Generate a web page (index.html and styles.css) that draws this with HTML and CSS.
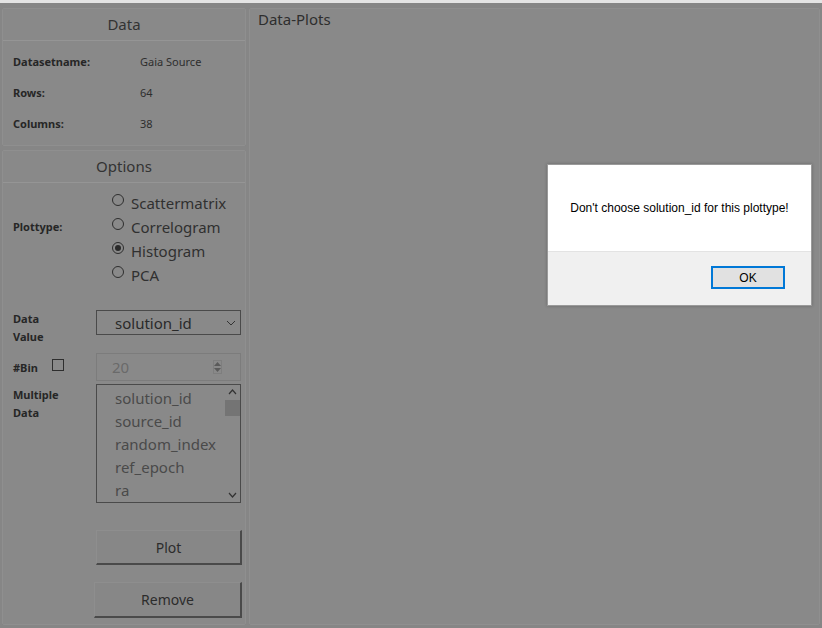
FILE: index.html
```html
<!DOCTYPE html>
<html>
<head>
<meta charset="utf-8">
<link rel="stylesheet" href="styles.css">
</head>
<body>
<div class="topstrip"></div>
<div class="app">
  <div class="sidebar">
    <section class="group data-group">
      <div class="group-title">Data</div>
      <div class="info">
        <div class="info-row"><span class="lbl">Datasetname:</span><span class="val">Gaia Source</span></div>
        <div class="info-row"><span class="lbl">Rows:</span><span class="val">64</span></div>
        <div class="info-row"><span class="lbl">Columns:</span><span class="val">38</span></div>
      </div>
    </section>
    <section class="group options-group">
      <div class="group-title">Options</div>
      <div class="opt-row plottype">
        <span class="lbl">Plottype:</span>
        <div class="radios">
          <div class="radio"><span class="circle"></span>Scattermatrix</div>
          <div class="radio"><span class="circle"></span>Correlogram</div>
          <div class="radio"><span class="circle checked"></span>Histogram</div>
          <div class="radio"><span class="circle"></span>PCA</div>
        </div>
      </div>
      <div class="opt-row datavalue">
        <span class="lbl twoline">Data<br>Value</span>
        <div class="select"><span>solution_id</span>
          <svg class="chev" width="10" height="6" viewBox="0 0 10 6"><path d="M1 1 L5 5 L9 1" fill="none" stroke="#333" stroke-width="1"/></svg>
        </div>
      </div>
      <div class="opt-row bin">
        <span class="lbl binlbl">#Bin <span class="check"></span></span>
        <div class="spin"><span>20</span>
          <div class="spinarrows">
            <svg width="7" height="4" viewBox="0 0 7 4"><path d="M0 4 L3.5 0 L7 4Z" fill="#5a5a5a"/></svg>
            <svg width="7" height="4" viewBox="0 0 7 4"><path d="M0 0 L3.5 4 L7 0Z" fill="#5a5a5a"/></svg>
          </div>
        </div>
      </div>
      <div class="opt-row multi">
        <span class="lbl twoline">Multiple<br>Data</span>
        <div class="listbox">
          <ul class="items">
            <li>solution_id</li>
            <li>source_id</li>
            <li>random_index</li>
            <li>ref_epoch</li>
            <li>ra</li>
          </ul>
          <div class="scrollbar">
            <svg width="9" height="6" viewBox="0 0 9 6"><path d="M1 5 L4.5 1 L8 5" fill="none" stroke="#333" stroke-width="1.2"/></svg>
            <div class="thumb"></div>
            <div class="track"></div>
            <svg width="9" height="6" viewBox="0 0 9 6"><path d="M1 1 L4.5 5 L8 1" fill="none" stroke="#333" stroke-width="1.2"/></svg>
          </div>
        </div>
      </div>
      <div class="btn-row plotrow"><button class="btn plot">Plot</button></div>
      <div class="btn-row removerow"><button class="btn remove">Remove</button></div>
    </section>
  </div>
  <section class="plots">
    <div class="plots-title">Data-Plots</div>
  </section>
</div>
<div class="dialog">
  <div class="dialog-body">Don't choose solution_id for this plottype!</div>
  <div class="dialog-foot"><button class="ok">OK</button></div>
</div>
</body>
</html>
```

FILE: styles.css
```css
html, body {
  margin: 0;
  padding: 0;
  width: 822px;
  height: 628px;
  overflow: hidden;
  background: #868686;
  font-family: "Noto Sans", "Open Sans", sans-serif;
  color: #2c2c2c;
}
.topstrip {
  height: 3px;
  background: #e4e4e4;
}
.app {
  display: flex;
  padding: 5px 2px 0 2px;
  gap: 3px;
  height: 617px;
}
.sidebar {
  width: 244px;
  display: flex;
  flex-direction: column;
  gap: 4px;
}
.group {
  background: #898989;
  border: 1px solid #8f8f8f;
  border-radius: 2px;
}
.data-group { height: 136px; }
.options-group { flex: 1; }
.group-title {
  height: 31px;
  line-height: 30px;
  text-align: center;
  font-size: 15px;
  color: #333;
  border-bottom: 1px solid #959595;
}
.info { padding: 5px 0 0 10px; }
.info-row {
  display: flex;
  height: 31px;
  align-items: center;
  font-size: 11px;
}
.lbl {
  font-weight: bold;
  font-size: 11px;
  color: #262626;
}
.info-row .lbl { width: 127px; }
.val { color: #2e2e2e; }

.opt-row {
  display: flex;
  padding-left: 10px;
}
.opt-row > .lbl { width: 83px; flex: none; }
.plottype { padding-top: 8px; height: 119px; box-sizing: border-box; }
.plottype .lbl { padding-top: 28px; }
.radios { display: flex; flex-direction: column; padding-left: 16px; }
.radio {
  display: flex;
  align-items: center;
  height: 24px;
  font-size: 15px;
  color: #303030;
}
.circle {
  width: 12px;
  height: 12px;
  border: 1px solid #2e2e2e;
  border-radius: 50%;
  margin-right: 7px;
  box-sizing: border-box;
  position: relative;
  top: -3px;
}
.circle.checked::after {
  content: "";
  position: absolute;
  left: 2px; top: 2px;
  width: 6px; height: 6px;
  border-radius: 50%;
  background: #2a2a2a;
}
.datavalue { margin-top: 8px; height: 39px; }
.twoline { line-height: 18px; }
.select {
  width: 145px;
  height: 25px;
  border: 1px solid #4a4a4a;
  box-sizing: border-box;
  display: flex;
  align-items: center;
  padding-left: 18px;
  font-size: 15px;
  color: #2a2a2a;
  position: relative;
}
.chev { position: absolute; right: 4px; top: 9px; }
.bin { height: 31px; margin-top: 4px; }
.binlbl { display: flex; align-items: flex-start; padding-top: 7px; }
.check {
  display: inline-block;
  width: 12px; height: 12px;
  border: 1px solid #2e2e2e;
  box-sizing: border-box;
  margin-left: 14px;
  margin-top: -1px;
}
.spin {
  width: 145px;
  height: 28px;
  border: 1px solid #7c7c7c;
  box-sizing: border-box;
  display: flex;
  align-items: center;
  padding-left: 15px;
  font-size: 15px;
  color: #6a6a6a;
  position: relative;
}
.spinarrows {
  position: absolute;
  right: 18px; top: 6px;
  width: 9px; height: 14px;
  display: flex; flex-direction: column; align-items: center; gap: 2px;
  border: 1px solid #7e7e7e;
  box-sizing: border-box;
  padding-top: 1px;
}
.multi { height: 119px; }
.multi .lbl { padding-top: 2px; }
.listbox {
  width: 145px;
  height: 119px;
  border: 1px solid #4a4a4a;
  box-sizing: border-box;
  display: flex;
  overflow: hidden;
}
.items {
  list-style: none;
  margin: 0;
  padding: 2px 0 0 18px;
  flex: 1;
  font-size: 15px;
  color: #4a4a4a;
}
.items li { height: 23px; line-height: 23px; }
.scrollbar {
  width: 16px;
  display: flex;
  flex-direction: column;
  align-items: center;
  padding-top: 4px;
  padding-bottom: 4px;
  box-sizing: border-box;
}
.thumb {
  width: 15px; height: 16px;
  background: #747474;
  margin-top: 5px;
}
.track { flex: 1; }
.btn-row { padding-left: 93px; }
.plotrow { margin-top: 27px; }
.removerow { margin-top: 17px; padding-left: 91px; }
.btn {
  display: block;
  width: 147px;
  height: 35px;
  background: #878787;
  border: none;
  border-top: 1px solid #8e8e8e;
  border-left: 1px solid #8e8e8e;
  border-right: 2px solid #4a4a4a;
  border-bottom: 2px solid #4a4a4a;
  font-family: "Noto Sans", "Open Sans", sans-serif;
  font-size: 14px;
  color: #2c2c2c;
  padding: 0;
}
.plot { width: 146px; }
.remove { width: 148px; height: 36px; }
.plots {
  flex: 1;
  background: #898989;
  border: 1px solid #8f8f8f;
  border-radius: 2px;
  height: 617px;
  box-sizing: border-box;
}
.plots-title {
  padding: 0 0 0 8px;
  font-size: 15px;
  color: #2e2e2e;
}
.dialog {
  position: absolute;
  left: 547px;
  top: 164px;
  width: 265px;
  height: 142px;
  background: #f0f0f0;
  border: 1px solid #9a9a9a;
  box-sizing: border-box;
  box-shadow: 0 0 3px rgba(0,0,0,0.25);
  font-family: "Liberation Sans", Arial, sans-serif;
}
.dialog-body {
  height: 86px;
  background: #ffffff;
  border-bottom: 1px solid #e3e3e3;
  text-align: center;
  font-size: 12px;
  color: #000;
  line-height: 87px;
}
.dialog-foot {
  display: flex;
  justify-content: flex-end;
  padding: 14px 26px 0 0;
}
.ok {
  width: 74px;
  height: 23px;
  background: #e1e1e1;
  border: 2px solid #0078d7;
  font-family: "Liberation Sans", Arial, sans-serif;
  font-size: 12px;
  color: #000;
  padding: 0;
}
```
